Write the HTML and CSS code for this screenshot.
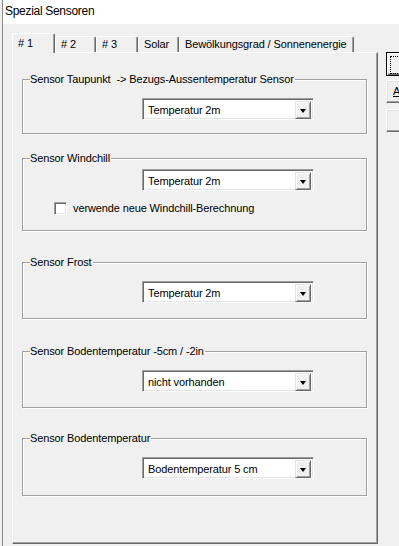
FILE: index.html
```html
<!DOCTYPE html>
<html lang="de">
<head>
    <meta charset="UTF-8">
    <title>Spezial Sensoren</title>
    <link rel="stylesheet" href="styles.css">
</head>
<body>
    <div class="window">
        <div class="titlebar">Spezial Sensoren</div>
        <div class="client">
            <div class="tabctl">
                <div class="tabs">
                    <div class="tab active t1">#&nbsp;1</div>
                    <div class="tab t2">#&nbsp;2</div>
                    <div class="tab t3">#&nbsp;3</div>
                    <div class="tab t4">Solar</div>
                    <div class="tab t5">Bewölkungsgrad / Sonnenenergie</div>
                </div>
                <div class="panel">
                    <div class="group g1">
                        <div class="legend">Sensor Taupunkt &nbsp;-&gt; Bezugs-Aussentemperatur Sensor</div>
                        <div class="combo"><span class="value">Temperatur 2m</span><span class="drop"><i class="arrow"></i></span></div>
                    </div>
                    <div class="group g2">
                        <div class="legend">Sensor Windchill</div>
                        <div class="combo"><span class="value">Temperatur 2m</span><span class="drop"><i class="arrow"></i></span></div>
                        <div class="check"><span class="box"></span><span>verwende neue Windchill-Berechnung</span></div>
                    </div>
                    <div class="group g3">
                        <div class="legend">Sensor Frost</div>
                        <div class="combo"><span class="value">Temperatur 2m</span><span class="drop"><i class="arrow"></i></span></div>
                    </div>
                    <div class="group g4">
                        <div class="legend">Sensor Bodentemperatur -5cm / -2in</div>
                        <div class="combo"><span class="value">nicht vorhanden</span><span class="drop"><i class="arrow"></i></span></div>
                    </div>
                    <div class="group g5">
                        <div class="legend">Sensor Bodentemperatur</div>
                        <div class="combo"><span class="value">Bodentemperatur 5 cm</span><span class="drop"><i class="arrow"></i></span></div>
                    </div>
                </div>
            </div>
            <div class="side">
                <div class="btn default"><span class="focus"></span></div>
                <div class="btn b2"><u>A</u></div>
                <div class="btn b3"></div>
            </div>
        </div>
    </div>
</body>
</html>
```

FILE: styles.css
```css
body{
    margin: 0;
    background: #f0f0f0;
    font-family: "Liberation Sans", Arial, sans-serif;
    font-size: 11px;
    letter-spacing: -0.12px;
    color: #000;
    width: 399px;
    height: 546px;
    overflow: hidden;
}
.window{
    margin-left: 2px;
    border-left: 1px solid #8a8a8a;
    height: 546px;
}
.titlebar{
    background: #fff;
    height: 24px;
    line-height: 22px;
    padding-left: 2px;
    font-size: 12px;
    letter-spacing: -0.3px;
}
.client{
    display: flex;
    align-items: flex-start;
}
.tabctl{
    flex-shrink: 0;
    margin: 9px 0 0 9px;
    width: 366px;
}

/* tabs */
.tabs{
    display: flex;
    align-items: flex-end;
    height: 19px;
}
.tab{
    flex-shrink: 0;
    box-sizing: border-box;
    height: 16px;
    line-height: 14px;
    padding-left: 5px;
    background: #f0f0f0;
    border-top: 1px solid #fff;
    border-left: 1px solid #fff;
    border-right: 1px solid #696969;
    border-radius: 2px 2px 0 0;
    box-shadow: inset -1px 0 #a0a0a0;
    white-space: nowrap;
}
.tab.active{
    position: relative;
    height: 20px;
    margin-bottom: -1px;
    line-height: 18px;
}
.t1{ width: 43px; }
.t2{ width: 41px; }
.t3{ width: 42px; }
.t4{ width: 41px; }
.t5{ width: 175px; }

.panel{
    box-sizing: border-box;
    height: 492px;
    padding: 26px 0 0 9px;
    border-top: 1px solid #fff;
    border-left: 1px solid #fff;
    border-right: 1px solid #696969;
    border-bottom: 1px solid #696969;
    box-shadow: inset -1px -1px #a0a0a0;
}

/* group boxes */
.group{
    box-sizing: border-box;
    width: 345px;
    border: 1px solid #a0a0a0;
    box-shadow: 1px 1px 0 #fff, inset 1px 1px 0 #fff;
}
.g1{ height: 55px; }
.g2{ height: 73px; margin-top: 24px; }
.g3{ height: 57px; margin-top: 31px; }
.g4{ height: 57px; margin-top: 32px; }
.g5{ height: 58px; margin-top: 30px; }
.legend{
    width: fit-content;
    height: 13px;
    line-height: 13px;
    margin: -7px 0 0 7px;
    padding-right: 1px;
    background: #f0f0f0;
    white-space: nowrap;
}

/* combo box */
.combo{
    display: flex;
    box-sizing: border-box;
    width: 172px;
    height: 22px;
    margin: 12px 0 0 119px;
    padding: 1px;
    background: #fff;
    border-top: 1px solid #a0a0a0;
    border-left: 1px solid #a0a0a0;
    border-right: 1px solid #fff;
    border-bottom: 1px solid #fff;
    box-shadow: inset 1px 1px #696969, inset -1px -1px #e3e3e3;
}
.g2 .combo{ margin-top: 4px; }
.value{
    flex: 1;
    padding-left: 4px;
    line-height: 18px;
    margin-top: 1px;
}
.drop{
    box-sizing: border-box;
    width: 16px;
    height: 18px;
    margin: 1px 1px 0 0;
    display: flex;
    align-items: center;
    justify-content: center;
    background: #f0f0f0;
    border-top: 1px solid #e3e3e3;
    border-left: 1px solid #e3e3e3;
    border-right: 1px solid #696969;
    border-bottom: 1px solid #696969;
    box-shadow: inset 1px 1px #fff, inset -1px -1px #a0a0a0;
}
.arrow{
    width: 0;
    height: 0;
    border-left: 3px solid transparent;
    border-right: 3px solid transparent;
    border-top: 4px solid #000;
    margin-top: 1px;
}

/* checkbox */
.check{
    display: flex;
    align-items: center;
    gap: 6px;
    margin: 11px 0 0 31px;
    line-height: 13px;
}
.box{
    box-sizing: border-box;
    width: 13px;
    height: 13px;
    background: #fff;
    border-top: 1px solid #a0a0a0;
    border-left: 1px solid #a0a0a0;
    border-right: 1px solid #fff;
    border-bottom: 1px solid #fff;
    box-shadow: inset 1px 1px #696969, inset -1px -1px #e3e3e3;
}

/* dialog buttons, cut off by the window edge */
.side{
    flex-shrink: 0;
    width: 13px;
    overflow: hidden;
    margin: 28px 0 0 8px;
}
.btn{
    box-sizing: border-box;
    width: 30px;
    height: 23px;
    line-height: 21px;
    padding-left: 6px;
    background: #f0f0f0;
    border-top: 1px solid #fff;
    border-left: 1px solid #fff;
    border-right: 1px solid #696969;
    border-bottom: 1px solid #696969;
    box-shadow: inset -1px -1px #a0a0a0, inset 1px 1px #e3e3e3;
    white-space: nowrap;
}
.btn.default{
    height: 24px;
    border: 1px solid #000;
    padding: 3px;
    box-shadow: inset 1px 1px #fff, inset -1px -1px #696969, inset -2px -2px #a0a0a0;
}
.focus{
    display: block;
    height: 16px;
    border: 1px dotted #000;
}
.b2{ margin-top: 4px; font-size: 11px; padding-left: 6px; }
.b3{ margin-top: 6px; }
```
